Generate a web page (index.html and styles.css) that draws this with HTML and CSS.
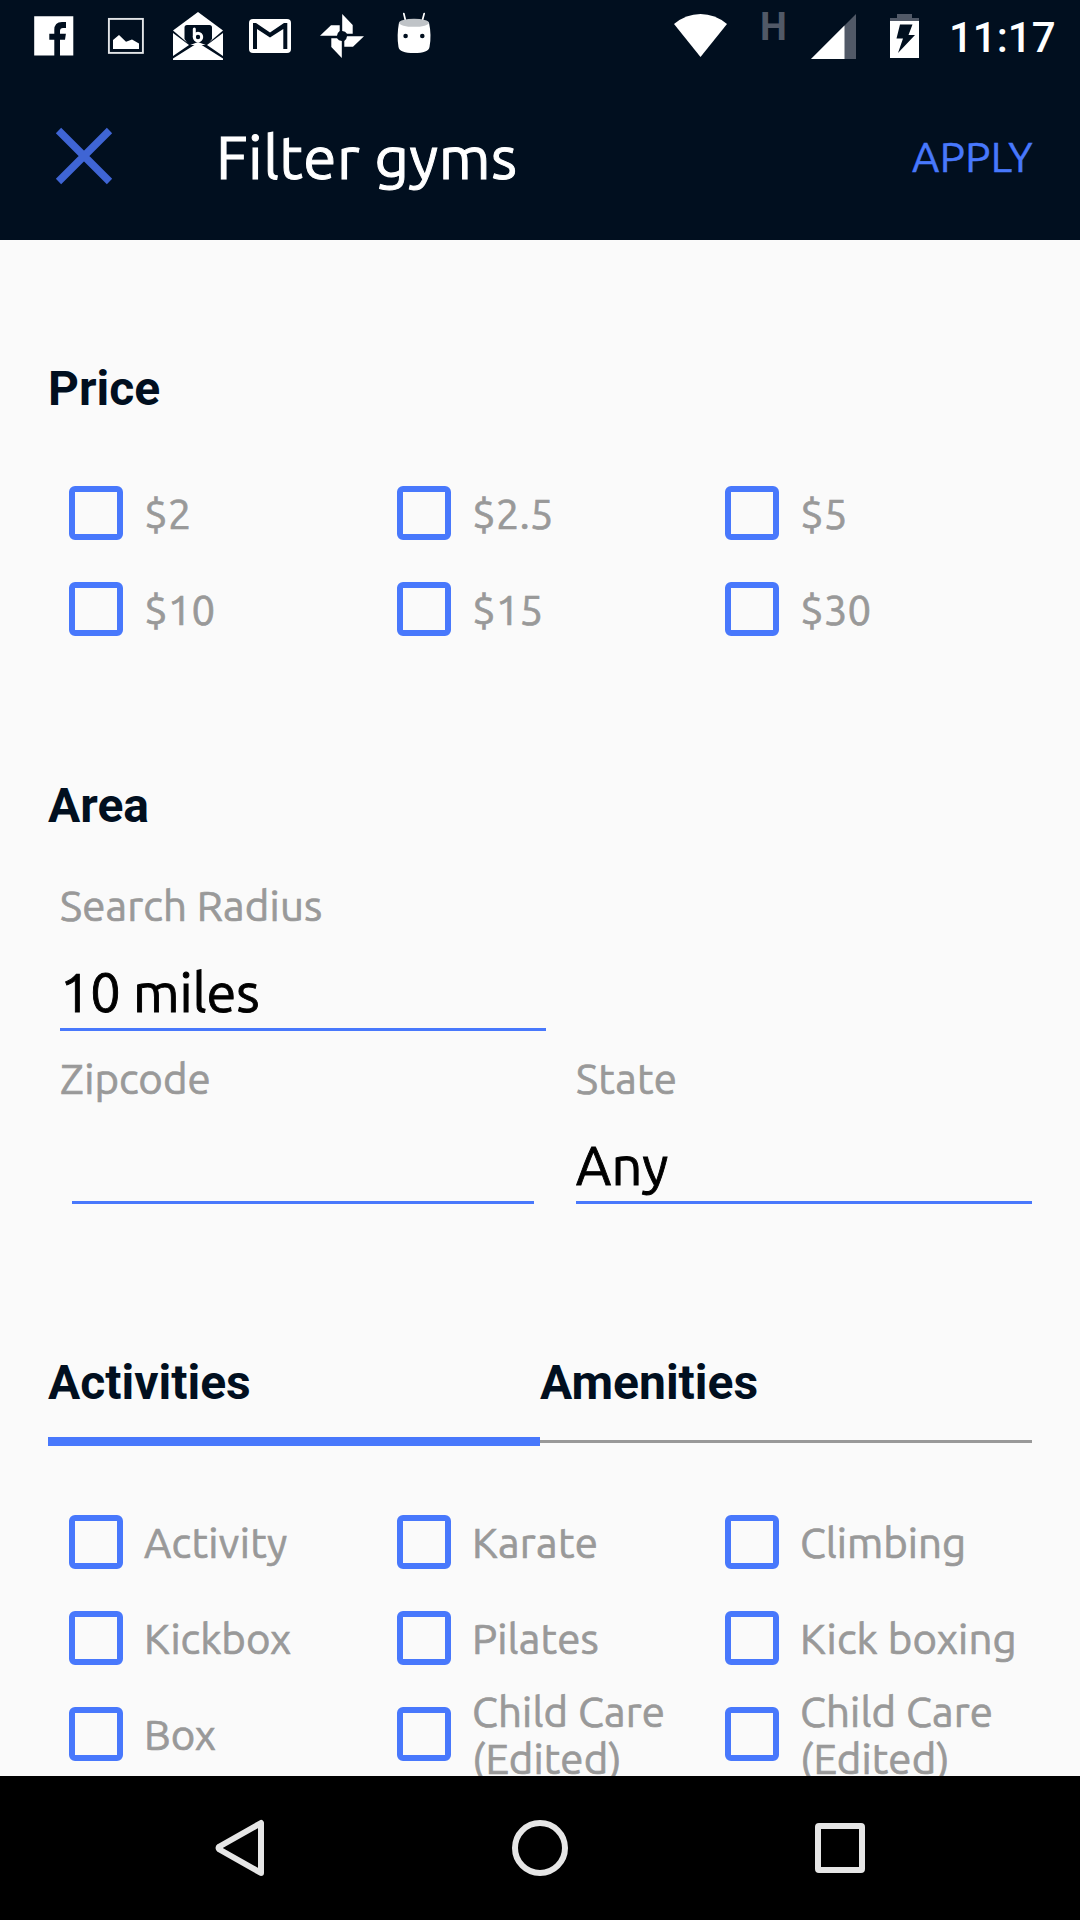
FILE: index.html
```html
<!DOCTYPE html>
<html lang="en">
<head>
<meta charset="utf-8">
<title>Filter gyms</title>
<link rel="stylesheet" href="styles.css">
</head>
<body>
<div class="screen">
  <header class="header">
    <div class="status">
      <div class="notices">
        <svg class="notice" viewBox="0 0 72 72"><path fill="#fff" fill-rule="evenodd" d="M16.2 16.2H55.3V55.5H42V39.8H47L47.9 33.7H42V31Q42 28 45 28H48V22H44Q36.3 22 36.3 30V33.7H31.3V39.8H36.3V55.5H16.2Z"/></svg>
        <svg class="notice" viewBox="0 0 72 72"><rect x="18.9" y="18.9" width="34" height="34" fill="none" stroke="#e3e5e8" stroke-width="1.9"/><path fill="#fff" d="M23 49V40L29 35 36 41.7 42 39.4 49 43.4V49Z"/></svg>
        <svg class="notice" viewBox="0 0 72 72"><path fill="#fff" d="M36 12 61 30.5 44 45H28L11 30.5Z"/><path fill="#010f1f" d="M22.5 39V27.5Q22.5 25 25 25H47.5Q50 25 50 27.5V39L45 45.5 36 42 27 45.5Z"/><path fill="#fff" d="M11 33 27 45 11 56ZM61 33 45 45 61 56ZM11 58.5 32 45.3Q36 42 40 45.3L61 58.5V60H11Z"/><g fill="none" stroke="#fff" stroke-width="3" stroke-linecap="round"><path d="M32.3 29V37"/><circle cx="36" cy="37" r="3.7"/></g></svg>
        <svg class="notice" viewBox="0 0 72 72"><rect x="15" y="19" width="42" height="34" rx="4" fill="#fff"/><path fill="#010f1f" d="M19 49V23H22L36 32.5 50 23H53.3V49H49.3V29L36 37.6 23 29V49Z"/></svg>
        <svg class="notice" viewBox="0 0 72 72"><g fill="#fff"><path id="blade" d="M36.200 14 46.700 25V33.700H41Q39.500 31.300 36.200 31Z"/><use href="#blade" transform="rotate(90 36 36)"/><use href="#blade" transform="rotate(180 36 36)"/><use href="#blade" transform="rotate(270 36 36)"/></g></svg>
        <svg class="notice" viewBox="0 0 72 72"><path stroke="#fff" stroke-width="1.7" stroke-linecap="round" d="M25.800 13.500 27.600 21M46.200 13.500 44.200 21"/><path fill="#fff" d="M21 22.500Q18.500 36 20.500 47 21.500 53 36 53 50.500 53 51.500 47 53.800 36 51 22.500Z"/><ellipse cx="36" cy="22.800" rx="15" ry="4" fill="#bfc3c7"/><circle cx="27.600" cy="36" r="2.300" fill="#010f1f"/><circle cx="44.300" cy="36" r="2.300" fill="#010f1f"/></svg>
      </div>
      <svg class="wifi" viewBox="0 0 54 72"><path fill="#fff" d="M26.500 57 0 24Q12 14 26.500 14T53 24Z"/></svg>
      <span class="network">H</span>
      <svg class="signal" viewBox="0 0 45 72"><path fill="#515967" d="M0 59 45 14V59Z"/><path fill="#fff" d="M0 59 33.500 25.500V59Z"/></svg>
      <svg class="battery" viewBox="0 0 29 72"><path fill="#515967" d="M7 14H22V18H29V22H0V18H7Z"/><path fill="#fff" d="M0 21H29V58H0Z"/><path fill="#010f1f" d="M10 24.500H22.500L18.500 35H25L8 53 13 38.500H6.500Z"/></svg>
      <span class="clock">11:17</span>
    </div>
    <div class="toolbar">
      <svg class="close" viewBox="0 0 60 60"><path fill="none" stroke="#3f65d4" stroke-width="7.500" d="M4.500 4.500 55.500 55.500M55.500 4.500 4.500 55.500"/></svg>
      <h1 class="title">Filter gyms</h1>
      <span class="apply">APPLY</span>
    </div>
  </header>

  <main class="content">
    <h2 class="heading">Price</h2>
    <div class="options">
      <label class="option"><i class="box"></i><span class="label">$2</span></label>
      <label class="option"><i class="box"></i><span class="label">$2.5</span></label>
      <label class="option"><i class="box"></i><span class="label">$5</span></label>
      <label class="option"><i class="box"></i><span class="label">$10</span></label>
      <label class="option"><i class="box"></i><span class="label">$15</span></label>
      <label class="option"><i class="box"></i><span class="label">$30</span></label>
    </div>

    <h2 class="heading">Area</h2>
    <div class="fields">
      <div class="field"><div class="name wide">Search Radius</div><div class="value miles">10 miles</div></div>
      <div class="field inset"><div class="name">Zipcode</div><div class="value"></div></div>
      <div class="field"><div class="name wider">State</div><div class="value wider">Any</div></div>
    </div>

    <div class="tabs">
      <h2 class="tab active">Activities</h2>
      <h2 class="tab">Amenities</h2>
    </div>
    <div class="options">
      <label class="option"><i class="box"></i><span class="label wider">Activity</span></label>
      <label class="option"><i class="box"></i><span class="label wider">Karate</span></label>
      <label class="option"><i class="box"></i><span class="label">Climbing</span></label>
      <label class="option"><i class="box"></i><span class="label">Kickbox</span></label>
      <label class="option"><i class="box"></i><span class="label wide">Pilates</span></label>
      <label class="option"><i class="box"></i><span class="label wide">Kick boxing</span></label>
      <label class="option"><i class="box"></i><span class="label">Box</span></label>
      <label class="option"><i class="box"></i><span class="label wide">Child Care (Edited)</span></label>
      <label class="option"><i class="box"></i><span class="label wide">Child Care (Edited)</span></label>
    </div>
  </main>

  <nav class="nav">
    <svg class="key" viewBox="0 0 60 60"><path fill="none" stroke="#e6e6e6" stroke-width="6" stroke-linejoin="round" d="M51 5V55L9.500 31.500Q7.500 30 9.500 28.500Z"/></svg>
    <svg class="key" viewBox="0 0 60 60"><circle cx="30" cy="30" r="25" fill="none" stroke="#e6e6e6" stroke-width="6"/></svg>
    <svg class="key" viewBox="0 0 60 60"><rect x="8" y="8" width="44" height="44" rx="1" fill="none" stroke="#e6e6e6" stroke-width="6"/></svg>
  </nav>
</div>
</body>
</html>
```
FILE: styles.css
```css
* { box-sizing: border-box; margin: 0; padding: 0; }

body { background: #fafafa; }

.screen {
  display: flex;
  flex-direction: column;
  width: 1080px;
  height: 1920px;
  overflow: hidden;
  background: #fafafa;
  font-family: Ubuntu, "Noto Sans", sans-serif;
  font-size: 42px;
  line-height: 47px;
  color: #999;
}

svg { display: block; flex: none; }

/* Status bar and toolbar */
.header { flex: none; height: 240px; background: #010f1f; color: #fff; }

.status { display: flex; align-items: center; height: 72px; padding-left: 18px; }
.notices { display: flex; margin-right: 224px; }
.notice { width: 72px; height: 72px; }
.wifi { width: 54px; height: 72px; }
.network {
  align-self: flex-start;
  width: 27px;
  margin: 8px 24px 0 32px;
  font: bold 38px/38px Roboto, sans-serif;
  color: #515967;
}
.signal { width: 45px; height: 72px; }
.battery { width: 29px; height: 72px; margin: 0 30px 0 34px; }
.clock { padding-top: 4px; font: 500 42px/50px Roboto, sans-serif; }

.toolbar { display: flex; align-items: center; height: 168px; padding: 0 47px 0 54px; }
.close { width: 60px; height: 60px; }
.title {
  flex: 1;
  margin-left: 102px;
  font-size: 60px;
  font-weight: 400;
  line-height: 67px;
  letter-spacing: 0.5px;
  -webkit-text-stroke: 1px currentColor;
}
.apply { color: #4878fc; letter-spacing: 0.4px; -webkit-text-stroke: 0.5px currentColor; }

/* Filter form */
.content { flex: none; height: 1536px; padding: 0 48px; overflow: hidden; }

.heading, .tab { font: bold 48px/56px Roboto, sans-serif; color: #010f1f; }
.heading { margin-top: 121px; }

.options {
  display: grid;
  grid-template-columns: repeat(3, 1fr);
  grid-auto-rows: 96px;
  margin-top: 48px;
}
.option { display: flex; align-items: center; gap: 21px; padding-left: 21px; }
.box { flex: none; width: 54px; height: 54px; border: 6px solid #4878fc; border-radius: 6px; }
.label { padding-top: 1px; }
.label, .name { -webkit-text-stroke: 0.7px currentColor; }

.fields {
  display: grid;
  grid-template-columns: 486px 456px;
  gap: 23px 30px;
  margin: 47px 0 0 12px;
}
.field:first-child, .inset { grid-column: 1; }
.name { height: 48px; padding-top: 1px; }
.value {
  height: 69px;
  margin-top: 33px;
  border-bottom: 3px solid #4878fc;
  font-size: 54px;
  line-height: 60px;
  color: #000;
  -webkit-text-stroke: 0.9px currentColor;
}
.inset .value { margin-left: 12px; margin-right: 12px; }

.tabs { display: flex; height: 91px; margin-top: 151px; }
.tab { flex: 1; height: 88px; border-bottom: 3px solid #999; }
.tab.active { height: 91px; border-bottom: 9px solid #4878fc; }

/* Letter tracking */
.wide { letter-spacing: 0.15px; }
.wider { letter-spacing: 0.35px; }
.miles { letter-spacing: -0.1px; }

/* Navigation keys */
.nav { display: flex; justify-content: center; align-items: center; gap: 240px; height: 144px; background: #000; }
.key { width: 60px; height: 60px; }
```
